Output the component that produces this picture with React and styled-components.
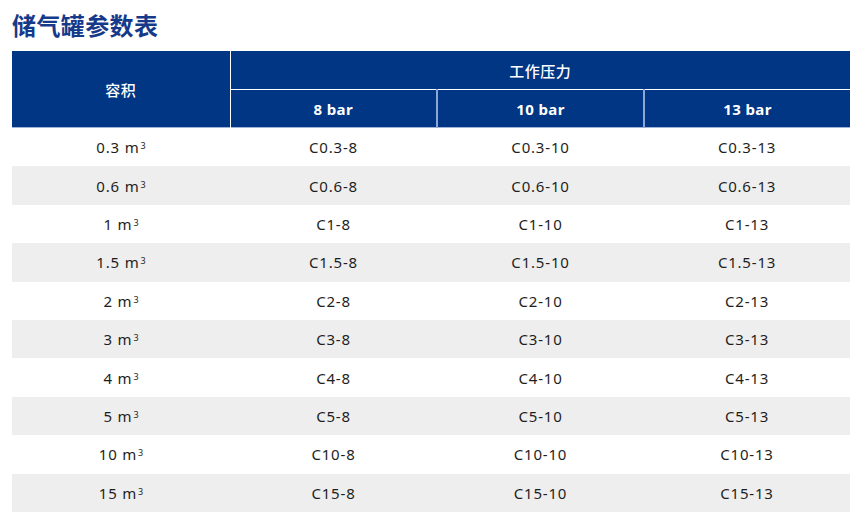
import React from "react";
import styled, { createGlobalStyle } from "styled-components";

const Global = createGlobalStyle`
  html, body { margin: 0; padding: 0; background: #fff; }
  body { font-family: "Noto Sans", "Noto Sans CJK SC", sans-serif; }
`;

const Page = styled.div`
  width: 868px;
  height: 526px;
  padding: 10px 18px 0 12px;
  box-sizing: border-box;
`;

const Title = styled.h1`
  margin: 0 0 11px 0;
  font-family: "Noto Sans CJK SC", "Noto Sans", sans-serif;
  font-weight: 700;
  font-size: 24px;
  line-height: 30px;
  color: #163a8a;
  letter-spacing: 0.4px;
`;

const Table = styled.table`
  width: 838px;
  border-collapse: collapse;
  table-layout: fixed;
`;

const Head = styled.thead`
  background: #003684;
  border-bottom: 1px solid #9fb3d9;
`;

const Th = styled.th`
  color: #fff;
  font-family: "Noto Sans", "Noto Sans CJK SC", sans-serif;
  font-weight: 700;
  font-size: 15px;
  letter-spacing: 0.4px;
  padding: 0;
  height: ${(p) => p.$h || 38}px;
  border-left: ${(p) => (p.$sep ? `${p.$sep}` : "none")};
  border-bottom: ${(p) => (p.$bottom ? "1px solid #fff" : "none")};
  text-align: center;
  vertical-align: middle;
`;

const CnLabel = styled.span`
  font-family: "Noto Sans CJK SC", sans-serif;
  font-weight: 500;
  letter-spacing: 0.5px;
`;

const Row = styled.tr`
  background: ${(p) => (p.$shade ? "#eeeeee" : "#ffffff")};
`;

const Td = styled.td`
  height: 38.4px;
  padding: 0;
  text-align: center;
  vertical-align: middle;
  font-family: "Noto Sans", sans-serif;
  font-size: 15px;
  letter-spacing: 0.8px;
  color: #1e1e1e;
`;

const Sup = styled.span`
  font-size: 9px;
  position: relative;
  top: -4px;
  margin-left: 1px;
  letter-spacing: 0;
`;

const sizes = ["0.3", "0.6", "1", "1.5", "2", "3", "4", "5", "10", "15"];
const pressures = ["8", "10", "13"];

export default function App() {
  return (
    <>
      <Global />
      <Page>
        <Title>储气罐参数表</Title>
        <Table>
          <colgroup>
            <col style={{ width: 218 }} />
            <col style={{ width: 207 }} />
            <col style={{ width: 207 }} />
            <col style={{ width: 206 }} />
          </colgroup>
          <Head>
            <tr>
              <Th rowSpan={2} $h={38}>
                <CnLabel>容积</CnLabel>
              </Th>
              <Th colSpan={3} $h={38} $sep="1px solid #ffffff" $bottom>
                <CnLabel>工作压力</CnLabel>
              </Th>
            </tr>
            <tr>
              {pressures.map((p, i) => (
                <Th
                  key={p}
                  $h={37}
                  $sep={i === 0 ? "1px solid #ffffff" : "2px solid #8ea6d6"}
                >
                  {p} bar
                </Th>
              ))}
            </tr>
          </Head>
          <tbody>
            {sizes.map((s, i) => (
              <Row key={s} $shade={i % 2 === 1}>
                <Td>
                  {s} m<Sup>3</Sup>
                </Td>
                {pressures.map((p) => (
                  <Td key={p}>
                    C{s}-{p}
                  </Td>
                ))}
              </Row>
            ))}
          </tbody>
        </Table>
      </Page>
    </>
  );
}
